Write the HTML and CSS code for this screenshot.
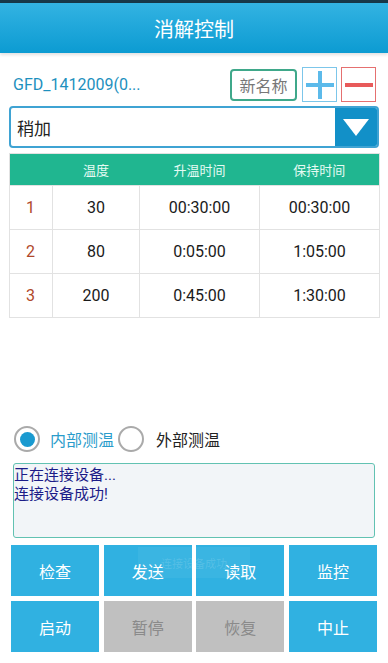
FILE: index.html
```html
<!DOCTYPE html>
<html>
<head>
<meta charset="utf-8">
<link rel="stylesheet" href="styles.css">
</head>
<body>
<div class="status"></div>
<header class="header">消解控制</header>
<div class="namerow">
  <div class="devname">GFD_1412009(0...</div>
  <div class="newname">新名称</div>
  <div class="iconbtn plus">
    <svg width="30" height="30" viewBox="0 0 30 30"><rect x="13" y="1" width="4" height="28" fill="#5cbaea"/><rect x="1" y="13" width="28" height="4" fill="#5cbaea"/></svg>
  </div>
  <div class="iconbtn minus">
    <svg width="30" height="30" viewBox="0 0 30 30"><rect x="1" y="13" width="28" height="4" fill="#e85a5a"/></svg>
  </div>
</div>
<div class="select">
  <div class="selval">稍加</div>
  <div class="selarrow">
    <svg width="26" height="17" viewBox="0 0 26 17"><polygon points="0,0 26,0 13,17" fill="#fff"/></svg>
  </div>
</div>
<table class="prog">
  <thead>
    <tr><th class="c1"></th><th class="c2">温度</th><th class="c3">升温时间</th><th class="c4">保持时间</th></tr>
  </thead>
  <tbody>
    <tr><td class="num">1</td><td>30</td><td>00:30:00</td><td>00:30:00</td></tr>
    <tr><td class="num">2</td><td>80</td><td>0:05:00</td><td>1:05:00</td></tr>
    <tr><td class="num">3</td><td>200</td><td>0:45:00</td><td>1:30:00</td></tr>
  </tbody>
</table>
<div class="radios">
  <div class="radio on"><span class="circle"><span class="dot"></span></span><span class="rlabel">内部测温</span></div>
  <div class="radio"><span class="circle"></span><span class="rlabel">外部测温</span></div>
</div>
<div class="log">正在连接设备...<br>连接设备成功!</div>
<div class="buttons">
  <div class="btn">检查</div>
  <div class="btn">发送</div>
  <div class="btn">读取</div>
  <div class="btn">监控</div>
  <div class="btn">启动</div>
  <div class="btn off">暂停</div>
  <div class="btn off">恢复</div>
  <div class="btn">中止</div>
  <div class="toast">连接设备成功</div>
</div>
</body>
</html>
```
FILE: styles.css
```css
* { box-sizing: border-box; }
html, body { margin: 0; padding: 0; background: #fff; }
body {
  width: 388px;
  height: 663px;
  overflow: hidden;
  font-family: Roboto, "Noto Sans CJK SC", sans-serif;
}
.status { height: 3px; background: #173848; }
.header {
  height: 50px;
  background: linear-gradient(#33b3e2, #0c9bd2);
  color: #fff;
  font-size: 20px;
  display: flex;
  align-items: center;
  justify-content: center;
  box-shadow: 0 2px 3px rgba(0,0,0,0.12);
  position: relative;
}
.namerow {
  display: flex;
  align-items: center;
  margin: 14px 12px 0 13px;
  height: 35px;
}
.devname {
  flex: 1;
  color: #1d90be;
  font-size: 16px;
}
.newname {
  width: 67px;
  height: 32px;
  border: 2px solid #3fa88a;
  border-radius: 4px;
  color: #777;
  font-size: 16px;
  display: flex;
  align-items: center;
  justify-content: center;
  margin-right: 5px;
}
.iconbtn {
  width: 35px;
  height: 35px;
  display: flex;
  align-items: center;
  justify-content: center;
}
.plus { border: 1px solid #7cc6ea; margin-right: 4px; }
.minus { border: 1px solid #e57070; }
.select {
  margin: 4px 9px 0 9px;
  height: 42px;
  border: 2px solid #3fa3d3;
  border-radius: 4px;
  display: flex;
  overflow: hidden;
}
.selval {
  flex: 1;
  display: flex;
  align-items: center;
  padding-left: 6px;
  font-size: 17px;
  color: #222;
}
.selarrow {
  width: 42px;
  background: #1290c8;
  display: flex;
  align-items: center;
  justify-content: center;
}
.prog {
  margin: 5px 9px 0 9px;
  width: 370px;
  border-collapse: collapse;
  table-layout: fixed;
  border: 1px solid #e2e2e2;
}
.prog th {
  background: #20b690;
  color: #e6fbf4;
  font-weight: normal;
  font-size: 13px;
  height: 32px;
  padding: 0;
}
.c1 { width: 43px; }
.c2 { width: 87px; }
.c3 { width: 120px; }
.c4 { width: 120px; }
.prog td {
  height: 44px;
  border: 1px solid #e2e2e2;
  text-align: center;
  font-size: 16px;
  color: #1a1a1a;
  padding: 0;
}
.prog td.num { color: #b0482a; text-align: left; padding-left: 16px; }
.radios {
  display: flex;
  align-items: center;
  margin: 108px 0 0 14px;
  height: 26px;
}
.radio { display: flex; align-items: center; }
.circle {
  width: 26px;
  height: 26px;
  border-radius: 50%;
  border: 2px solid #aaa;
  display: flex;
  align-items: center;
  justify-content: center;
}
.dot { width: 15px; height: 15px; border-radius: 50%; background: #1a9ad0; }
.rlabel { font-size: 16px; color: #222; margin-left: 12px; }
.radio.on .rlabel { color: #2a9ccb; margin-left: 10px; margin-right: 4px; }
.log {
  margin: 11px 13px 0 13px;
  height: 75px;
  border: 1px solid #62c2b2;
  border-radius: 3px;
  background: #f2f5f8;
  color: #1c1c88;
  font-size: 15px;
  line-height: 19px;
  padding: 2px 0 0 0;
}
.buttons {
  margin: 7px 11px 0 11px;
  display: grid;
  grid-template-columns: repeat(4, 1fr);
  column-gap: 4.67px;
  row-gap: 5px;
  position: relative;
}
.btn {
  height: 51px;
  background: #30b1e1;
  color: #fff;
  font-size: 16px;
  display: flex;
  align-items: center;
  justify-content: center;
}
.btn.off { background: #c0c0c0; color: #8a8a8a; }
.toast {
  position: absolute;
  left: 127px;
  top: 2px;
  width: 112px;
  height: 31px;
  background: rgba(255,255,255,0.05);
  color: rgba(255,255,255,0.15);
  font-size: 11px;
  display: flex;
  align-items: center;
  justify-content: center;
}
```
